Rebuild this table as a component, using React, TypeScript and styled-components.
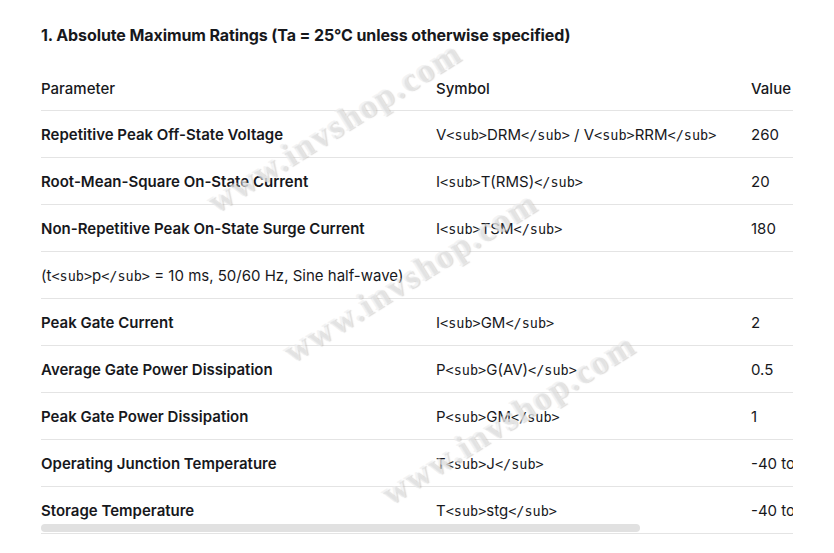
import styled, { createGlobalStyle } from 'styled-components';

type Row = {
    param: string,
    symbol: string,
    value: string,
    note?: boolean
};

const rows: Row[] = [
    { param: 'Repetitive Peak Off-State Voltage', symbol: 'V<sub>DRM</sub> / V<sub>RRM</sub>', value: '260' },
    { param: 'Root-Mean-Square On-State Current', symbol: 'I<sub>T(RMS)</sub>', value: '20' },
    { param: 'Non-Repetitive Peak On-State Surge Current', symbol: 'I<sub>TSM</sub>', value: '180' },
    { param: '(t<sub>p</sub> = 10 ms, 50/60 Hz, Sine half-wave)', symbol: '', value: '', note: true },
    { param: 'Peak Gate Current', symbol: 'I<sub>GM</sub>', value: '2' },
    { param: 'Average Gate Power Dissipation', symbol: 'P<sub>G(AV)</sub>', value: '0.5' },
    { param: 'Peak Gate Power Dissipation', symbol: 'P<sub>GM</sub>', value: '1' },
    { param: 'Operating Junction Temperature', symbol: 'T<sub>J</sub>', value: '-40 to +125' },
    { param: 'Storage Temperature', symbol: 'T<sub>stg</sub>', value: '-40 to +150' },
];

const marks = [
    { left: 188, top: 108 },
    { left: 264, top: 258 },
    { left: 362, top: 400 },
];

const TABLE_W = 944;
const VIEW_W = 752;

// raw tags are shown as text, in a mono face like the source page
function RawText({ text }: { text: string }) {
    const parts = text.split(/(<\/?sub>)/);
    return (
        <>
            {parts.map((p, i) =>
                /^<\/?sub>$/.test(p) ? <Tag key={i}>{p}</Tag> : <span key={i}>{p}</span>
            )}
        </>
    );
}

export default function App() {
    return (
        <Page>
            <GlobalStyle />
            <Title>1. Absolute Maximum Ratings (Ta = 25°C unless otherwise specified)</Title>
            <Frame>
                <Scroller>
                    <Table>
                        <colgroup>
                            <col style={{ width: 395 }} />
                            <col style={{ width: 315 }} />
                            <col style={{ width: 234 }} />
                        </colgroup>
                        <thead>
                            <tr>
                                <HeadCell>Parameter</HeadCell>
                                <HeadCell>Symbol</HeadCell>
                                <HeadCell>Value</HeadCell>
                            </tr>
                        </thead>
                        <tbody>
                            {rows.map((r, i) => (
                                <BodyRow key={i}>
                                    <Cell $bold={!r.note}><RawText text={r.param} /></Cell>
                                    <Cell><RawText text={r.symbol} /></Cell>
                                    <Cell>{r.value}</Cell>
                                </BodyRow>
                            ))}
                        </tbody>
                    </Table>
                </Scroller>
                <ScrollThumb style={{ width: Math.round(VIEW_W * VIEW_W / TABLE_W) }} />
            </Frame>
            {marks.map((m, i) => (
                <Watermark key={i} style={{ left: m.left, top: m.top }}>www.invshop.com</Watermark>
            ))}
        </Page>
    );
}

const GlobalStyle = createGlobalStyle`
    html, body {
        margin: 0;
        background: #fff;
    }
    body {
        font-family: Inter, "Noto Sans", sans-serif;
        color: #17181c;
    }
`

const Page = styled.div`
    position: relative;
    width: 834px;
    height: 553px;
    overflow: hidden;
    padding: 23px 41px 0;
    box-sizing: border-box;
`

const Title = styled.h3`
    margin: 0 0 17px;
    font-size: 16px;
    line-height: 24px;
    font-weight: 700;
    letter-spacing: -0.1px;
`

const Frame = styled.div`
    position: relative;
    width: ${VIEW_W}px;
`

const Scroller = styled.div`
    overflow-x: auto;
    scrollbar-width: none;
    &::-webkit-scrollbar {
        display: none;
    }
`

const ScrollThumb = styled.div`
    position: absolute;
    left: 0;
    bottom: 2px;
    height: 8px;
    border-radius: 4px;
    background: #e1e1e1;
`

const Table = styled.table`
    width: ${TABLE_W}px;
    border-collapse: collapse;
    table-layout: fixed;
`

const HeadCell = styled.th`
    text-align: left;
    font-size: 15px;
    font-weight: 500;
    line-height: 22px;
    height: 22px;
    padding: 14px 0 10px;
    white-space: nowrap;
`

const BodyRow = styled.tr`
    border-top: 1px solid #e4e4e4;
    border-bottom: 1px solid #e4e4e4;
`

const Cell = styled.td<{ $bold?: boolean }>`
    font-size: 15px;
    line-height: 22px;
    height: 22px;
    padding: 13px 0 11px;
    font-weight: ${(p) => (p.$bold ? 600 : 400)};
    white-space: nowrap;
    overflow: hidden;
`

const Tag = styled.span`
    font-family: "DejaVu Sans Mono", monospace;
    font-size: 13.5px;
    font-weight: 400;
    line-height: 1;
`

const Watermark = styled.div`
    position: absolute;
    font-family: "Liberation Serif", serif;
    font-weight: 700;
    font-size: 34px;
    letter-spacing: 2px;
    white-space: nowrap;
    color: rgba(245, 245, 245, 0.45);
    text-shadow: 1px 1px 1px rgba(160, 160, 160, 0.38), -1px -1px 0 rgba(235, 235, 235, 0.55);
    transform: rotate(-32deg);
    transform-origin: center;
    pointer-events: none;
`
